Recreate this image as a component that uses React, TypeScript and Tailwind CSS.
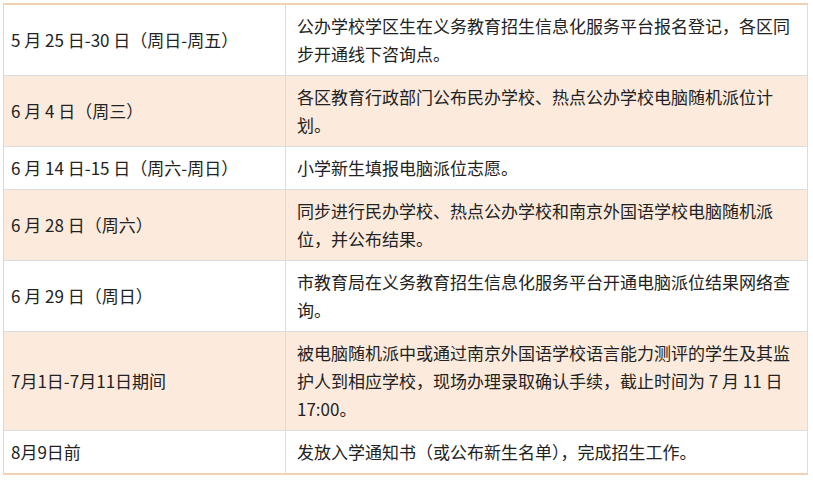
const rows: { date: string; desc: string }[] = [
  { date: '5 月 25 日-30 日（周日-周五）', desc: '公办学校学区生在义务教育招生信息化服务平台报名登记，各区同步开通线下咨询点。' },
  { date: '6 月 4 日（周三）', desc: '各区教育行政部门公布民办学校、热点公办学校电脑随机派位计划。' },
  { date: '6 月 14 日-15 日（周六-周日）', desc: '小学新生填报电脑派位志愿。' },
  { date: '6 月 28 日（周六）', desc: '同步进行民办学校、热点公办学校和南京外国语学校电脑随机派位，并公布结果。' },
  { date: '6 月 29 日（周日）', desc: '市教育局在义务教育招生信息化服务平台开通电脑派位结果网络查询。' },
  { date: '7月1日-7月11日期间', desc: '被电脑随机派中或通过南京外国语学校语言能力测评的学生及其监护人到相应学校，现场办理录取确认手续，截止时间为 7 月 11 日 17:00。' },
  { date: '8月9日前', desc: '发放入学通知书（或公布新生名单），完成招生工作。' },
];

export default function App() {
  return (
    <div className="w-[813px] h-[481px] bg-white pt-[3px] pl-[3px]">
      <table
        className="w-[805px] border-collapse text-[17px] leading-[28px] text-[#222]"
        style={{ fontFamily: '"Noto Sans CJK SC", "Noto Sans", sans-serif' }}
      >
        <tbody className="border-t-2 border-b-2 border-[#f3d2b3]">
          {rows.map((row, i) => (
            <tr key={i} className={`border-b border-[#dcdcdc] ${i % 2 === 1 ? 'bg-[#fcebdd]' : 'bg-white'}`}>
              <td className="w-[282px] border-l border-[#d9d9d9] pl-[7px] pr-2 py-[7px] align-middle">{row.date}</td>
              <td className="border-l border-r border-[#dcdcdc] pl-[11px] pr-[10px] py-[7px] align-middle">{row.desc}</td>
            </tr>
          ))}
        </tbody>
      </table>
    </div>
  );
}
